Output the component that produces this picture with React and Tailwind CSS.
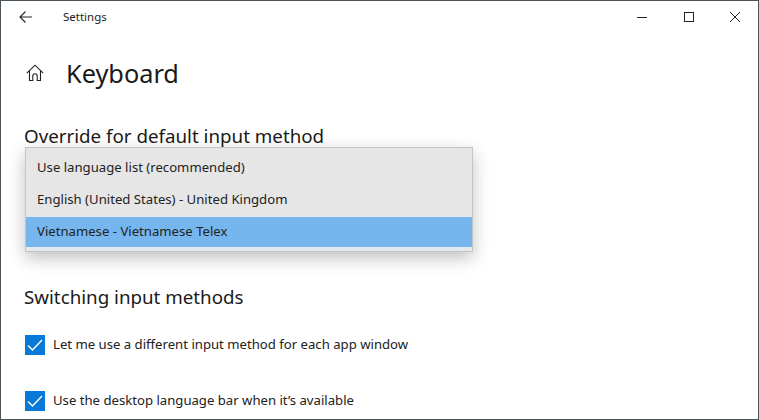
const font = { fontFamily: '"Noto Sans", sans-serif' };

function Check() {
  return (
    <div className="w-5 h-5 bg-[#0a78d7] flex items-center justify-center shrink-0">
      <svg width="20" height="20" viewBox="0 0 20 20" fill="none" stroke="#fff" strokeWidth="1.4">
        <path d="M3 10.5 L7.5 15 L17 5" />
      </svg>
    </div>
  );
}

function Option({ children }) {
  return <div className="h-8 pt-[2px] flex items-center pl-[11px] text-[13.15px] text-[#222]">{children}</div>;
}

export default function App() {
  return (
    <div className="w-[759px] h-[420px] overflow-hidden bg-white border border-[#4a5459] flex flex-col" style={font}>
      <div className="h-[32px] flex items-center shrink-0">
        <svg className="ml-[18px]" width="13" height="14" viewBox="0 0 13 14" fill="none" stroke="#222" strokeWidth="1.1">
          <path d="M13 7 H1 M6.5 1.5 L1 7 L6.5 12.5" />
        </svg>
        <span className="ml-[31px] text-[11.5px] text-[#222]">Settings</span>
        <div className="ml-auto flex items-center">
          <svg width="12" height="12" viewBox="0 0 12 12" fill="none" stroke="#222" strokeWidth="1"><path d="M1 6.5 H11" /></svg>
          <svg className="ml-[35px]" width="12" height="12" viewBox="0 0 12 12" fill="none" stroke="#222" strokeWidth="1"><rect x="1.5" y="1.5" width="9" height="9" /></svg>
          <svg className="ml-[34px] mr-[17px]" width="12" height="12" viewBox="0 0 12 12" fill="none" stroke="#222" strokeWidth="1"><path d="M1 1 L11 11 M11 1 L1 11" /></svg>
        </div>
      </div>
      <div className="flex items-center h-[48px] mt-[16px] pl-[25px] shrink-0">
        <svg width="18" height="18" viewBox="0 0 18 18" fill="none" stroke="#222" strokeWidth="1.1">
          <path d="M0.8 9.2 L9 1.2 L17.2 9.2 M3.5 7 V16.5 H6.8 V12 A2.2 2.2 0 0 1 11.2 12 V16.5 H14.5 V7" />
        </svg>
        <h1 className="ml-[22px] pt-[2px] text-[25.3px] text-[#1a1a1a] font-normal">Keyboard</h1>
      </div>
      <div className="pl-[23px] mt-[26px] flex flex-col">
        <h2 className="text-[18.75px] leading-[26px] text-[#1a1a1a]">Override for default input method</h2>
        <div className="relative h-[135px]">
          <div className="absolute left-[1px] top-[-2px] w-[448px] h-[105px] bg-[#e6e6e6] border border-[#c4c4c4] pt-[3px] shadow-[0_6px_16px_rgba(0,0,0,0.25)]">
            <Option>Use language list (recommended)</Option>
            <Option>English (United States) - United Kingdom</Option>
            <div className="h-[30px] mt-[2px] flex items-center pl-[11px] text-[13.15px] text-[#222] bg-[#76b6ee]">
              Vietnamese - Vietnamese Telex
            </div>
            <div className="h-[4px] bg-[#e4e9f0]" />
          </div>
        </div>
        <h2 className="text-[18.75px] leading-[26px] text-[#1a1a1a]">Switching input methods</h2>
        <div className="flex items-center gap-[8px] mt-[25px] pl-[1px]">
          <Check />
          <span className="text-[13.15px] text-[#222]">Let me use a different input method for each app window</span>
        </div>
        <div className="flex items-center gap-[8px] mt-[36px] pl-[1px]">
          <Check />
          <span className="text-[13.15px] text-[#222]">Use the desktop language bar when it’s available</span>
        </div>
      </div>
    </div>
  );
}
